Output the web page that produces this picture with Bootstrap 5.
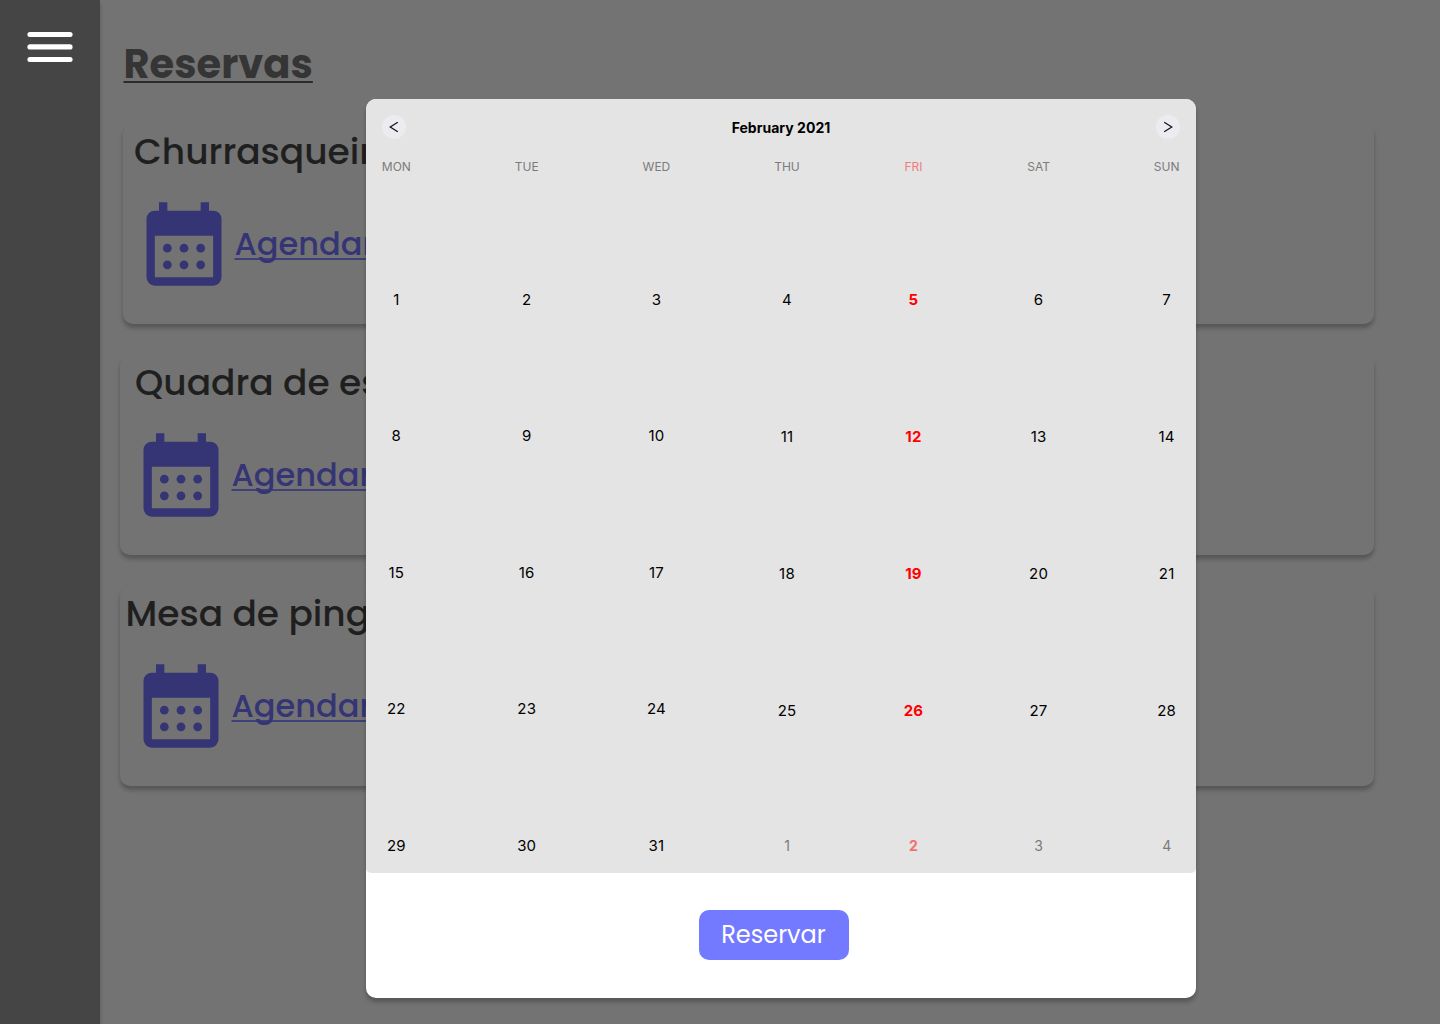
<!DOCTYPE html>
<html lang="pt-BR">
<head>
<meta charset="utf-8">
<meta name="viewport" content="width=device-width, initial-scale=1">
<title>Reservas</title>
<link href="https://cdn.jsdelivr.net/npm/bootstrap@5.3.0/dist/css/bootstrap.min.css" rel="stylesheet">
<style>
  body { background: #737373; font-family: Poppins, Inter, sans-serif; height: 1024px; overflow: hidden; }
  .side { width: 100px; background: #454545; box-shadow: 0 4px 4px rgba(0,0,0,.25); padding-top: 32px; }
  .burger { width: 46px; height: 30px; }
  .content-area { padding: 37px 66px 0 20px; }
  .page-title { margin: 0 0 33px 3.5px; font-size: 40px; line-height: 54px; font-weight: 700; color: #353535; }
  .page-title span { text-decoration: underline; text-decoration-thickness: 2px; text-underline-offset: 3px; text-decoration-skip-ink: none; text-decoration-color: #2b2b2b; }
  .place { height: 200px; border-radius: 10px; background: #737373; box-shadow: 0 4px 4px rgba(0,0,0,.25); }
  .place h2 { font-size: 36px; line-height: 54px; font-weight: 500; color: #1f1f1f; margin: 0; padding-top: 1px; white-space: nowrap; }
  .place-churrasqueira { margin-left: 3px; }
  .place-churrasqueira h2 { padding-left: 11px; }
  .place-quadra h2 { padding-left: 15px; }
  .place-mesa h2 { padding-left: 5.5px; }
  .place-list { gap: 31px; }
  .place svg { width: 100px; height: 100px; fill: #353575; flex: none; }
  .place a { font-size: 32px; line-height: 50px; font-weight: 500; color: #353575; padding-bottom: 1px; padding-left: .5px; text-decoration: underline; text-decoration-thickness: 2px; text-underline-offset: 3px; text-decoration-skip-ink: none; text-decoration-color: #404078; }
  .place-action { padding: 15px 0 0 11px; }
  .sheet { position: absolute; left: 366px; top: 99px; width: 830px; height: 899px; border-radius: 10px; box-shadow: 0 4px 4px rgba(0,0,0,.25); }
  .calendar { height: 774px; background: #e4e4e4; border-radius: 10px 10px 5px 5px; padding: 16px; font-family: Inter, sans-serif; color: #000; }
  .month { font-size: 14px; font-weight: 700; line-height: 26px; height: 24px; letter-spacing: .03px; }
  .step { width: 24px; height: 24px; border-radius: 50%; background: #ebebf0; }
  .days { margin: 20px .5px 0 -.2px; }
  .dow { font-size: 12px; line-height: 15px; color: #7b7b7b; }
  .day { font-size: 15px; line-height: 22px; letter-spacing: .2px; }
  .out { font-size: 14px; line-height: 20.5px; color: #7b7b7b; }
  .holiday .dow { color: #f27c7c; }
  .holiday .day { color: #f00; font-weight: 700; }
  .holiday .out { color: #f27070; font-weight: 700; }
  .reserve { width: 150px; height: 50px; margin: 37px 0 0 333px; border-radius: 10px; background: #747aff; color: #fff; font-size: 24px; line-height: 50px; padding: 0 1px 0 0; border: 0; }
  .reserve:hover { background: #747aff; color: #fff; }
</style>
<script src="https://cdn.jsdelivr.net/npm/bootstrap@5.3.0/dist/js/bootstrap.bundle.min.js"></script>
</head>
<body class="d-flex position-relative">
  <svg class="d-none" aria-hidden="true">
    <symbol id="cal" viewBox="0 0 24 24">
      <path fill-rule="evenodd" d="M6 2h2v2h8V2h2v2h1a2 2 0 0 1 2 2v14a2 2 0 0 1-2 2H5a2 2 0 0 1-2-2V6a2 2 0 0 1 2-2h1zM5 10v10h14V10z"/>
      <circle cx="8" cy="13" r="1.05"/><circle cx="12" cy="13" r="1.05"/><circle cx="16" cy="13" r="1.05"/>
      <circle cx="8" cy="17" r="1.05"/><circle cx="12" cy="17" r="1.05"/><circle cx="16" cy="17" r="1.05"/>
    </symbol>
  </svg>

  <aside class="side d-flex justify-content-center align-items-start flex-shrink-0 h-100">
    <svg class="burger" viewBox="0 0 46 30" fill="#fff"><rect x=".4" width="45.2" height="5" rx="2.5"/><rect x=".4" y="12.3" width="45.2" height="5.2" rx="2.6"/><rect x=".4" y="25" width="45.2" height="5" rx="2.5"/></svg>
  </aside>

  <main class="content-area flex-grow-1">
    <h1 class="page-title"><span>Reservas</span></h1>
    <div class="place-list d-flex flex-column">
      <section class="place place-churrasqueira">
        <h2>Churrasqueira</h2>
        <div class="place-action d-flex align-items-center"><svg><use href="#cal"/></svg><a href="#">Agendar</a></div>
      </section>
      <section class="place place-quadra">
        <h2>Quadra de esportes</h2>
        <div class="place-action d-flex align-items-center"><svg><use href="#cal"/></svg><a href="#">Agendar</a></div>
      </section>
      <section class="place place-mesa">
        <h2>Mesa de ping pong</h2>
        <div class="place-action d-flex align-items-center"><svg><use href="#cal"/></svg><a href="#">Agendar</a></div>
      </section>
    </div>
  </main>

  <div class="sheet bg-white" role="dialog" aria-label="February 2021">
    <div class="calendar d-flex flex-column">
      <div class="d-flex justify-content-between">
        <div class="step"><svg class="d-block" width="24" height="24" fill="none" stroke="#111" stroke-width="1.2"><path d="M15.8 7.2 8.2 12l7.6 4.8"/></svg></div>
        <div class="month">February 2021</div>
        <div class="step"><svg class="d-block" width="24" height="24" fill="none" stroke="#111" stroke-width="1.2"><path d="M8.2 7.2 15.8 12l-7.6 4.8"/></svg></div>
      </div>
      <div class="days d-flex justify-content-between flex-grow-1">
        <div class="d-flex flex-column justify-content-between align-items-center"><span class="dow">MON</span><span class="day">1</span><span class="day">8</span><span class="day">15</span><span class="day">22</span><span class="day">29</span></div>
        <div class="d-flex flex-column justify-content-between align-items-center"><span class="dow">TUE</span><span class="day">2</span><span class="day">9</span><span class="day">16</span><span class="day">23</span><span class="day">30</span></div>
        <div class="d-flex flex-column justify-content-between align-items-center"><span class="dow">WED</span><span class="day">3</span><span class="day">10</span><span class="day">17</span><span class="day">24</span><span class="day">31</span></div>
        <div class="d-flex flex-column justify-content-between align-items-center"><span class="dow">THU</span><span class="day">4</span><span class="day">11</span><span class="day">18</span><span class="day">25</span><span class="out">1</span></div>
        <div class="holiday d-flex flex-column justify-content-between align-items-center"><span class="dow">FRI</span><span class="day">5</span><span class="day">12</span><span class="day">19</span><span class="day">26</span><span class="out">2</span></div>
        <div class="d-flex flex-column justify-content-between align-items-center"><span class="dow">SAT</span><span class="day">6</span><span class="day">13</span><span class="day">20</span><span class="day">27</span><span class="out">3</span></div>
        <div class="d-flex flex-column justify-content-between align-items-center"><span class="dow">SUN</span><span class="day">7</span><span class="day">14</span><span class="day">21</span><span class="day">28</span><span class="out">4</span></div>
      </div>
    </div>
    <button class="btn reserve" type="button">Reservar</button>
  </div>
</body>
</html>
